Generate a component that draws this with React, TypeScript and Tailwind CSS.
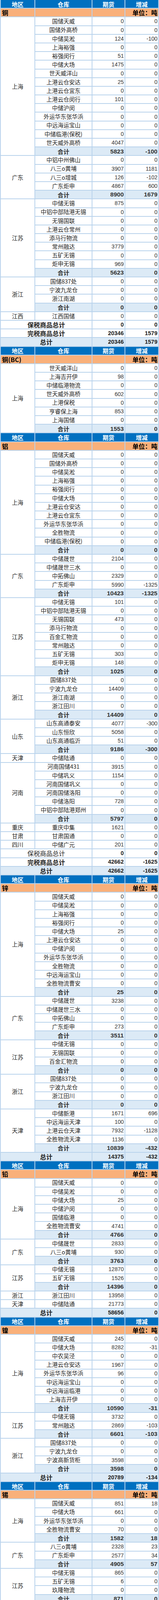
import { Fragment } from "react";

type Item = [string, number, number];
type Group = { region: string; items: Item[]; total?: [number, number] };
type Sum = { label: string; qty: number; chg: number; blue?: boolean; thin?: boolean };
type Section = { metal: string; groups: Group[]; sums: Sum[] };

// zero row shortcut
const z = (name: string): Item => [name, 0, 0];

const sections: Section[] = [
  {
    metal: "铜",
    groups: [
      {
        region: "上海",
        items: [
          z("国储天威"),
          z("国储外高桥"),
          ["中储吴淞", 124, -100],
          z("上海裕强"),
          ["裕强闵行", 51, 0],
          ["中储大场", 1475, 0],
          z("世天威洋山"),
          ["上港云仓安达", 25, 0],
          z("上港云仓宜东"),
          ["上港云仓闵行", 101, 0],
          z("中储沪闵"),
          z("外运华东张华浜"),
          z("中远海运宝山"),
          z("中储临港(保税)"),
          ["世天威外高桥", 4047, 0],
        ],
        total: [5823, -100],
      },
      {
        region: "广东",
        items: [
          z("中铝中州佛山"),
          ["八三o黄埔", 3907, 1181],
          ["八三o增城", 126, -102],
          ["广东炬申", 4867, 600],
        ],
        total: [8900, 1679],
      },
      {
        region: "江苏",
        items: [
          ["中储无锡", 875, 0],
          z("中铝中部陆港无锡"),
          z("无锡国联"),
          z("上港云仓常州"),
          z("添马行物流"),
          ["常州融达", 3779, 0],
          z("五矿无锡"),
          ["炬申无锡", 969, 0],
        ],
        total: [5623, 0],
      },
      {
        region: "浙江",
        items: [z("国储837处"), z("宁波九龙仓"), z("浙江南湖")],
        total: [0, 0],
      },
      { region: "江西", items: [z("江西国储")] },
    ],
    sums: [
      { label: "保税商品总计", qty: 0, chg: 0 },
      { label: "完税商品总计", qty: 20346, chg: 1579 },
      { label: "总计", qty: 20346, chg: 1579, blue: true },
    ],
  },
  {
    metal: "铜(BC)",
    groups: [
      {
        region: "上海",
        items: [
          z("世天威洋山"),
          ["上海吉开伊", 98, 0],
          z("中储临港物流"),
          ["世天威外高桥", 602, 0],
          z("上港保税"),
          ["亨睿保上海", 853, 0],
          z("上海国储"),
        ],
        total: [1553, 0],
      },
    ],
    sums: [],
  },
  {
    metal: "铝",
    groups: [
      {
        region: "上海",
        items: [
          z("国储天威"),
          z("国储外高桥"),
          z("中储吴淞"),
          z("上海裕强"),
          z("裕强闵行"),
          z("中储大场"),
          z("上港云仓安达"),
          z("上港云仓宜东"),
          z("外运华东张华浜"),
          z("全胜物流"),
          z("中储临港(保税)"),
        ],
        total: [0, 0],
      },
      {
        region: "广东",
        items: [
          ["中储晟世", 2104, 0],
          z("中储晟世三水"),
          ["中拓佛山", 2329, 0],
          ["广东炬申", 5990, -1325],
        ],
        total: [10423, -1325],
      },
      {
        region: "江苏",
        items: [
          ["中储无锡", 101, 0],
          z("中铝中部陆港无锡"),
          ["无锡国联", 473, 0],
          z("添马行物流"),
          z("百金汇物流"),
          z("常州融达"),
          ["五矿无锡", 303, 0],
          ["炬申无锡", 148, 0],
        ],
        total: [1025, 0],
      },
      {
        region: "浙江",
        items: [z("国储837处"), ["宁波九龙仓", 14409, 0], z("浙江南湖"), z("浙江田川")],
        total: [14409, 0],
      },
      {
        region: "山东",
        items: [["山东高通泰安", 4077, -300], ["山东恒欣", 5058, 0], ["山东高通临沂", 51, 0]],
        total: [9186, -300],
      },
      { region: "天津", items: [z("中储陆通")] },
      {
        region: "河南",
        items: [
          ["河南国储431", 3915, 0],
          ["中储巩义", 1154, 0],
          z("河南国储巩义"),
          z("河南国储洛阳"),
          ["中储洛阳", 728, 0],
          z("中铝中部陆港郑州"),
        ],
        total: [5797, 0],
      },
      { region: "重庆", items: [["重庆中集", 1621, 0]] },
      { region: "甘肃", items: [z("甘肃国通")] },
      { region: "四川", items: [["中储广元", 201, 0]] },
    ],
    sums: [
      { label: "保税商品总计", qty: 0, chg: 0, thin: true },
      { label: "完税商品总计", qty: 42662, chg: -1625 },
      { label: "总计", qty: 42662, chg: -1625, blue: true },
    ],
  },
  {
    metal: "锌",
    groups: [
      {
        region: "上海",
        items: [
          z("国储天威"),
          z("中储吴淞"),
          z("上海裕强"),
          z("裕强闵行"),
          ["中储大场", 25, 0],
          z("上港云仓安达"),
          z("中储沪闵"),
          z("外运华东张华浜"),
          z("全胜物流"),
          z("中远海运宝山"),
          z("全胜物流曹安"),
        ],
        total: [25, 0],
      },
      {
        region: "广东",
        items: [["中储晟世", 3238, 0], z("中储晟世三水"), z("中拓佛山"), ["广东炬申", 273, 0]],
        total: [3511, 0],
      },
      {
        region: "江苏",
        items: [z("中储无锡"), z("无锡国联"), z("百金汇物流")],
        total: [0, 0],
      },
      {
        region: "浙江",
        items: [z("国储837处"), z("宁波九龙仓"), z("浙江田川")],
        total: [0, 0],
      },
      {
        region: "天津",
        items: [
          ["中储新港", 1671, 696],
          ["中远海运天津", 100, 0],
          ["上港云仓天津", 7932, -1128],
          ["全胜物流天津", 1136, 0],
        ],
        total: [10839, -432],
      },
    ],
    sums: [{ label: "总计", qty: 14375, chg: -432, blue: true }],
  },
  {
    metal: "铅",
    groups: [
      {
        region: "上海",
        items: [
          z("国储天威"),
          z("中储吴淞"),
          ["中储大场", 25, 0],
          z("中储沪闵"),
          z("国储临港"),
          ["全胜物流曹安", 4741, 0],
        ],
        total: [4766, 0],
      },
      {
        region: "广东",
        items: [["中储晟世", 2833, 0], ["八三o黄埔", 930, 0]],
        total: [3763, 0],
      },
      {
        region: "江苏",
        items: [["中储无锡", 12870, 0], ["五矿无锡", 1526, 0]],
        total: [14396, 0],
      },
      { region: "浙江", items: [["浙江田川", 13958, 0]] },
      { region: "天津", items: [["中储陆通", 21773, 0]] },
    ],
    sums: [{ label: "总计", qty: 58656, chg: 0, blue: true }],
  },
  {
    metal: "镍",
    groups: [
      {
        region: "上海",
        items: [
          ["国储天威", 245, 0],
          ["中储大场", 8282, -31],
          z("中农吴泾"),
          ["上港云仓安达", 1967, 0],
          ["外运华东张华浜", 96, 0],
          z("中远海运宝山"),
          z("中远海运临港"),
          z("上海吉开伊"),
        ],
        total: [10590, -31],
      },
      {
        region: "江苏",
        items: [["中储无锡", 3732, 0], ["常州融达", 2869, -103]],
        total: [6601, -103],
      },
      {
        region: "浙江",
        items: [z("国储837处"), z("宁波九龙仓"), ["宁波高新货柜", 3598, 0]],
        total: [3598, 0],
      },
    ],
    sums: [{ label: "总计", qty: 20789, chg: -134, blue: true }],
  },
  {
    metal: "锡",
    groups: [
      {
        region: "上海",
        items: [
          ["国储天威", 851, 18],
          ["中储大场", 661, 0],
          z("外运华东张华浜"),
          ["全胜物流曹安", 70, 0],
        ],
        total: [1582, 18],
      },
      {
        region: "广东",
        items: [["八三o黄埔", 2328, 23], ["广东炬申", 2577, 34]],
        total: [4905, 57],
      },
      {
        region: "江苏",
        items: [["中储无锡", 865, 0], ["五矿无锡", 6, 0], z("玖隆物流")],
        total: [871, 0],
      },
    ],
    sums: [{ label: "总计", qty: 7358, chg: 75, blue: true }],
  },
  {
    metal: "氧化铝仓库",
    groups: [
      {
        region: "山东",
        items: [
          z("山港青岛国际物流"),
          z("外运华中黄岛"),
          z("外运华中胶州"),
          z("外运华中市北"),
          z("山港青岛港"),
          z("象屿速传青岛"),
        ],
        total: [0, 0],
      },
      {
        region: "河南",
        items: [z("中铝物流郑州"), z("中储洛阳"), z("中铝中部陆港郑州")],
        total: [0, 0],
      },
      { region: "广西", items: [["炬申钦州", 600, 0]] },
      { region: "甘肃", items: [z("甘肃国通")] },
      {
        region: "新疆",
        items: [["新疆诚通", 2106, 0], ["炬申新疆", 6008, 0], ["中疆物流", 4528, 0]],
        total: [12642, 0],
      },
    ],
    sums: [{ label: "总计", qty: 13242, chg: 0, blue: true }],
  },
  {
    metal: "氧化铝厂库",
    groups: [
      {
        region: "山东",
        items: [z("中铝山东"), z("山东宏拓")],
        total: [0, 0],
      },
      { region: "河南", items: [z("中州铝业")] },
    ],
    sums: [{ label: "总计", qty: 0, chg: 0, blue: true }],
  },
];

const cjk = "font-['Noto_Sans_CJK_SC',sans-serif]";
const num = "font-['Liberation_Sans','Noto_Sans_CJK_SC',sans-serif]";
const td = "h-[20.19px] p-0 align-middle whitespace-nowrap leading-none";
const name = `${td} ${cjk} bg-white text-center text-[14.5px] text-[#222]`;
const val = `${td} ${num} bg-white pr-[2px] text-right text-[14px] text-[#333]`;
const sub = "bg-[#dceaf6]";
const orange = "bg-[#f9b07a]";
const head = ["地区", "仓库", "期货", "增减"];

function SectionRows({ s }: { s: Section }) {
  return (
    <>
      <tr>
        {head.map((h) => (
          <td
            key={h}
            className={`${td} ${cjk} bg-[#0070c0] text-center text-[15px] font-bold text-white`}
          >
            {h}
          </td>
        ))}
      </tr>
      <tr>
        <td className={`${td} ${cjk} ${orange} pl-[3px] text-left text-[16px] font-bold text-black`}>
          {s.metal}
        </td>
        <td className={`${td} ${orange}`} />
        <td className={`${td} ${orange}`} />
        <td className={`${td} ${cjk} ${orange} pr-[2px] text-right text-[16px] font-bold text-black`}>
          单位：吨
        </td>
      </tr>

      {s.groups.map((g, gi) => {
        const span = g.items.length + (g.total ? 1 : 0);
        return (
          <Fragment key={gi}>
            {g.items.map(([w, qty, chg], i) => (
              <tr key={i}>
                {i === 0 && (
                  <td rowSpan={span} className={name}>
                    {g.region}
                  </td>
                )}
                <td className={name}>{w}</td>
                <td className={val}>{qty}</td>
                <td className={val}>{chg}</td>
              </tr>
            ))}
            {g.total && (
              <tr>
                <td className={`${td} ${cjk} ${sub} text-center text-[15px] font-bold text-[#333]`}>
                  合计
                </td>
                <td className={`${td} ${num} ${sub} pr-[2px] text-right text-[15.5px] font-bold text-[#333]`}>
                  {g.total[0]}
                </td>
                <td className={`${td} ${num} ${sub} pr-[2px] text-right text-[15.5px] font-bold text-[#333]`}>
                  {g.total[1]}
                </td>
              </tr>
            )}
          </Fragment>
        );
      })}

      {s.sums.map((t) => {
        const bg = t.blue ? sub : "bg-white";
        return (
          <tr key={t.label}>
            <td
              colSpan={2}
              className={`${td} ${cjk} ${bg} text-center text-[16px] text-[#222] ${
                t.thin ? "font-normal" : "font-bold"
              }`}
            >
              {t.label}
            </td>
            <td className={`${td} ${num} ${bg} pr-[2px] text-right text-[14.5px] font-bold text-[#222]`}>
              {t.qty}
            </td>
            <td className={`${td} ${num} ${bg} pr-[2px] text-right text-[14.5px] font-bold text-[#222]`}>
              {t.chg}
            </td>
          </tr>
        );
      })}
    </>
  );
}

export default function App() {
  return (
    <div className="w-[406px] overflow-hidden bg-[#b9d3ec]">
      <table className="-mt-[2px] w-[406px] table-fixed border-separate border-spacing-[2px] bg-[#b9d3ec]">
        <colgroup>
          <col className="w-[86px]" />
          <col className="w-[144px]" />
          <col className="w-[82px]" />
          <col className="w-[84px]" />
        </colgroup>
        <tbody>
          {sections.map((s) => (
            <SectionRows key={s.metal} s={s} />
          ))}
        </tbody>
      </table>
    </div>
  );
}
